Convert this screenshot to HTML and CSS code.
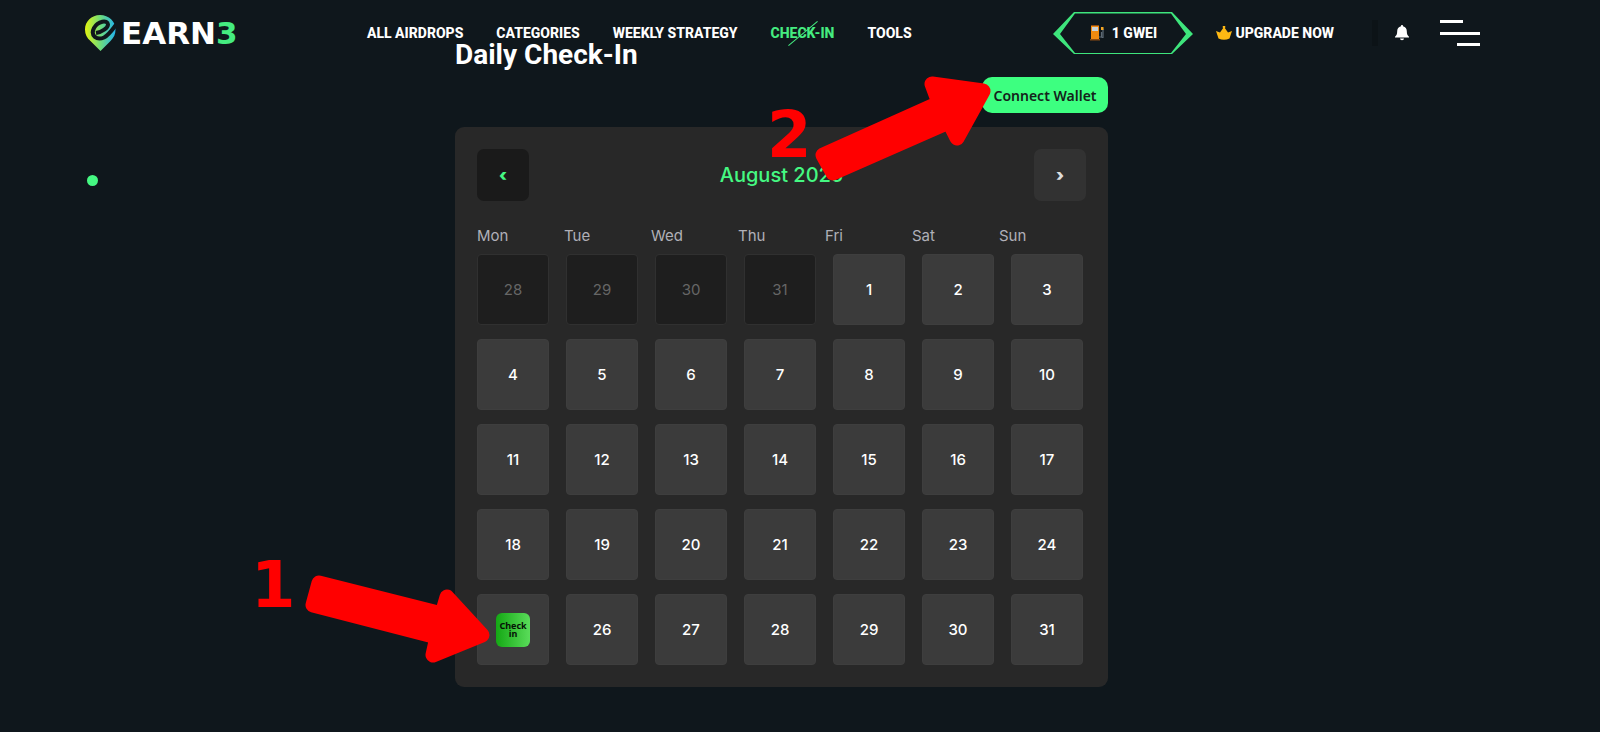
FILE: index.html
```html
<!DOCTYPE html>
<html lang="en">
<head>
  <meta charset="UTF-8">
  <meta name="viewport" content="width=device-width, initial-scale=1">
  <title>Daily Check-In</title>
  <link rel="stylesheet" href="styles.css">
</head>
<body>

  <header class="header">
    <a class="logo" href="#">
      <svg class="logo-pin" viewBox="0 0 31 36" aria-hidden="true">
        <defs>
          <linearGradient id="pin" x1="0" y1="0" x2="1" y2="0">
            <stop offset="0" stop-color="#e2f410"/>
            <stop offset="0.5" stop-color="#6fdc7a"/>
            <stop offset="1" stop-color="#22b4ee"/>
          </linearGradient>
        </defs>
        <path fill="url(#pin)" d="M15 0C6.500 0 0 6.500 0 14.500c0 5 2 8.500 5.500 11.500L15.500 36l10-10c3.500-3.500 5-7 5-11.500C30.500 6.500 24 0 15 0z"/>
        <path fill="none" stroke="#0f171c" stroke-width="4" d="M11 18c6-1 12-5 12-8.500C22.500 4.500 13 6 9 13c-4 8 3 12.500 10 9.500 5-2.500 8-7.500 13-14"/>
      </svg>
      <span class="logo-text">EARN<b>3</b></span>
    </a>

    <nav class="nav">
      <a href="#">ALL AIRDROPS</a>
      <a href="#">CATEGORIES</a>
      <a href="#">WEEKLY STRATEGY</a>
      <a class="active" href="#">CHECK-IN</a>
      <a href="#">TOOLS</a>
    </nav>

    <div class="actions">
      <a class="gwei" href="#">
        <svg class="gwei-frame" viewBox="0 0 140 42" aria-hidden="true">
          <path fill="#3ee57c" fill-rule="evenodd" d="M0 22 21 0h98l21 22-21 20H21zM7 22l15 19h96l15-19L118 1.500H22z"/>
        </svg>
        <svg class="pump" viewBox="0 0 14 16" aria-hidden="true">
          <path fill="#f08a10" d="M1 1h8v14H1z"/>
          <path fill="#c9d3da" d="M2 2h6v4H2z"/>
          <path fill="#8a4b12" d="M0 14h10v1.500H0zM1 0h8v1H1z"/>
          <path fill="none" stroke="#5d6a75" stroke-width="1.200" d="M9 12h2.500V7m0 5.500h1.500V4L11 2.500"/>
          <path fill="#f5a623" d="M11 2h2.500v3H11z"/>
        </svg>
        <span>1 GWEI</span>
      </a>
      <a class="upgrade" href="#">
        <svg class="crown" viewBox="0 0 16 14" aria-hidden="true">
          <path fill="#fdb813" d="M0 5l4 1.500L7.200 2a1.300 1.300 0 1 1 1.600 0L12 6.500 16 5l-2.500 7.500q-5.500 2.500-11 0z"/>
        </svg>
        <span>UPGRADE NOW</span>
      </a>
      <span class="divider"></span>
      <button class="bell" aria-label="Notifications">
        <svg viewBox="0 0 14 16" aria-hidden="true">
          <path fill="#fff" d="M7 0a1 1 0 0 1 1 1.200c2.500.5 3.800 2.500 3.800 5 0 3 .8 4.300 2.200 5.600v.7H0v-.7c1.400-1.300 2.200-2.600 2.200-5.600 0-2.500 1.300-4.500 3.800-5A1 1 0 0 1 7 0zM5 13.500h4a2 1.800 0 0 1-4 0z"/>
        </svg>
      </button>
      <button class="menu" aria-label="Menu">
        <span></span>
        <span></span>
        <span></span>
      </button>
    </div>
  </header>

  <span class="cursor-dot"></span>

  <main class="checkin">
    <h1>Daily Check-In</h1>
    <button class="connect">Connect Wallet</button>

    <section class="calendar">
      <div class="calendar-head">
        <button class="arrow prev" aria-label="Previous month">‹</button>
        <h2>August 2025</h2>
        <button class="arrow next" aria-label="Next month">›</button>
      </div>

      <div class="weekdays">
        <span>Mon</span>
        <span>Tue</span>
        <span>Wed</span>
        <span>Thu</span>
        <span>Fri</span>
        <span>Sat</span>
        <span>Sun</span>
      </div>

      <div class="days">
        <button class="day" disabled>28</button>
        <button class="day" disabled>29</button>
        <button class="day" disabled>30</button>
        <button class="day" disabled>31</button>
        <button class="day">1</button>
        <button class="day">2</button>
        <button class="day">3</button>
        <button class="day">4</button>
        <button class="day">5</button>
        <button class="day">6</button>
        <button class="day">7</button>
        <button class="day">8</button>
        <button class="day">9</button>
        <button class="day">10</button>
        <button class="day">11</button>
        <button class="day">12</button>
        <button class="day">13</button>
        <button class="day">14</button>
        <button class="day">15</button>
        <button class="day">16</button>
        <button class="day">17</button>
        <button class="day">18</button>
        <button class="day">19</button>
        <button class="day">20</button>
        <button class="day">21</button>
        <button class="day">22</button>
        <button class="day">23</button>
        <button class="day">24</button>
        <button class="day"><span class="today">Check in</span></button>
        <button class="day">26</button>
        <button class="day">27</button>
        <button class="day">28</button>
        <button class="day">29</button>
        <button class="day">30</button>
        <button class="day">31</button>
      </div>
    </section>

    <!-- Step markers over the calendar -->
    <span class="step step-one">1</span>
    <svg class="pointer pointer-one" viewBox="0 0 186 90" aria-hidden="true">
      <path d="M14 10 137 41 142 24 177 62 128 82 132 64 8 32z"/>
    </svg>
    <span class="step step-two">2</span>
    <svg class="pointer pointer-two" viewBox="0 0 178 108" aria-hidden="true">
      <path d="M9 82 125 30 118 11 169 18 143 65 135 49 19 100z"/>
    </svg>
  </main>

</body>
</html>
```
FILE: styles.css
```css
* { box-sizing: border-box; margin: 0; padding: 0; }

body {
  font-family: Inter, sans-serif;
  background: #0f171c;
  color: #fff;
  min-height: 100vh;
  padding: 38px 37px 44px 0;
}

a {
  color: inherit;
  text-decoration: none;
}

button {
  border: none;
  background: none;
  color: inherit;
  font: inherit;
  cursor: pointer;
}

/* Header */
.header {
  position: absolute;
  top: 0;
  left: 0;
  right: 0;
  height: 66px;
  padding: 0 120px 0 85px;
  display: flex;
  align-items: center;
  font-family: Roboto, sans-serif;
  font-size: 14px;
  font-weight: 800;
  white-space: nowrap;
}

.logo {
  display: flex;
  align-items: center;
  gap: 5px;
  width: 156px;
}
.logo-pin {
  width: 31px;
  height: 36px;
}
.logo-text {
  font-family: "DejaVu Sans", sans-serif;
  font-size: 31px;
  font-weight: 700;
  line-height: 36px;
}
.logo-text b {
  color: #45ec80;
  font-weight: 700;
}

.nav {
  display: flex;
  gap: 33px;
  margin-left: 126px;
}
.nav .active {
  position: relative;
  color: #45ec80;
}
.nav .active::after {
  content: "";
  position: absolute;
  left: 50%;
  top: 50%;
  width: 38px;
  height: 1px;
  margin-left: -19px;
  background: #45ec80;
  transform: rotate(-40deg);
}

.actions {
  display: flex;
  align-items: center;
  margin-left: auto;
}
.gwei {
  position: relative;
  display: flex;
  align-items: center;
  justify-content: center;
  gap: 8px;
  width: 140px;
  height: 42px;
}
.gwei-frame {
  position: absolute;
  inset: 0;
}
.pump {
  width: 14px;
  height: 16px;
}
.upgrade {
  display: flex;
  align-items: center;
  gap: 3px;
  margin-left: 23px;
}
.crown {
  width: 16px;
  height: 14px;
}
.divider {
  width: 6px;
  height: 26px;
  margin: 0 17px 0 38px;
  background: #0c1317;
}
.bell {
  width: 14px;
  height: 16px;
}
.bell svg {
  display: block;
}
.menu {
  display: flex;
  flex-direction: column;
  justify-content: space-between;
  width: 40px;
  height: 26px;
  margin-left: 31px;
}
.menu span {
  width: 40px;
  height: 3px;
  background: #fff;
}
.menu span:first-child { width: 23px; }
.menu span:last-child { width: 23px; align-self: flex-end; }

.cursor-dot {
  position: absolute;
  left: 87px;
  top: 175px;
  width: 11px;
  height: 11px;
  border-radius: 50%;
  background: #45f882;
}

/* Check-in */
.checkin {
  position: relative;
  max-width: 653px;
  margin: 0 auto;
  display: flex;
  flex-direction: column;
}
h1 {
  font-family: Roboto, sans-serif;
  font-size: 28px;
  font-weight: 700;
  line-height: 34px;
}
.connect {
  align-self: flex-end;
  width: 126px;
  height: 36px;
  margin: 5px 0 14px;
  border-radius: 10px;
  background: #3dff80;
  color: #14221a;
  font-family: "Noto Sans", sans-serif;
  font-size: 14px;
  font-weight: 600;
}

.calendar {
  padding: 22px;
  border-radius: 9px;
  background: #282828;
}
.calendar-head {
  display: flex;
  align-items: center;
  justify-content: space-between;
}
.calendar-head h2 {
  color: #45f882;
  font-size: 20px;
  font-weight: 500;
}
.arrow {
  width: 52px;
  height: 52px;
  border-radius: 7px;
  font-size: 17px;
  font-weight: 900;
}
.prev {
  background: #1a1a1a;
  color: #45f882;
}
.next {
  background: #323232;
  color: #ddd;
}

.weekdays {
  display: grid;
  grid-template-columns: repeat(7, 1fr);
  margin: 23px 0 6px;
  color: #b0b0b8;
  font-size: 15px;
  line-height: 24px;
}
.days {
  display: grid;
  grid-template-columns: repeat(7, 1fr);
  gap: 14px 17px;
  padding-right: 3px;
}
.day {
  display: flex;
  align-items: center;
  justify-content: center;
  height: 71px;
  border: 1px solid #3e3e3e;
  border-radius: 4px;
  background: #3b3b3b;
  font-size: 15px;
  font-weight: 500;
}
.day:disabled {
  border-color: #303030;
  background: #1e1e1e;
  color: #666;
  font-weight: 400;
}
.today {
  display: flex;
  align-items: center;
  width: 34px;
  height: 34px;
  border-radius: 6px;
  background: linear-gradient(90deg, #14a814, #5adc5a);
  color: #061206;
  font-family: "Noto Sans", sans-serif;
  font-size: 9px;
  font-weight: 700;
  line-height: 8px;
  text-align: center;
}

/* Step markers */
.step {
  position: absolute;
  color: #f00;
  font-family: "DejaVu Sans", sans-serif;
  font-size: 64px;
  font-weight: 700;
  line-height: 64px;
}
.step-one { left: -204px; top: 515px; }
.step-two { left: 312px; top: 65px; }

.pointer {
  position: absolute;
  fill: #f00;
  stroke: #f00;
  stroke-width: 15px;
  stroke-linejoin: round;
}
.pointer-one {
  left: -150px;
  top: 535px;
  width: 186px;
}
.pointer-two {
  left: 359px;
  top: 35px;
  width: 178px;
}
```
